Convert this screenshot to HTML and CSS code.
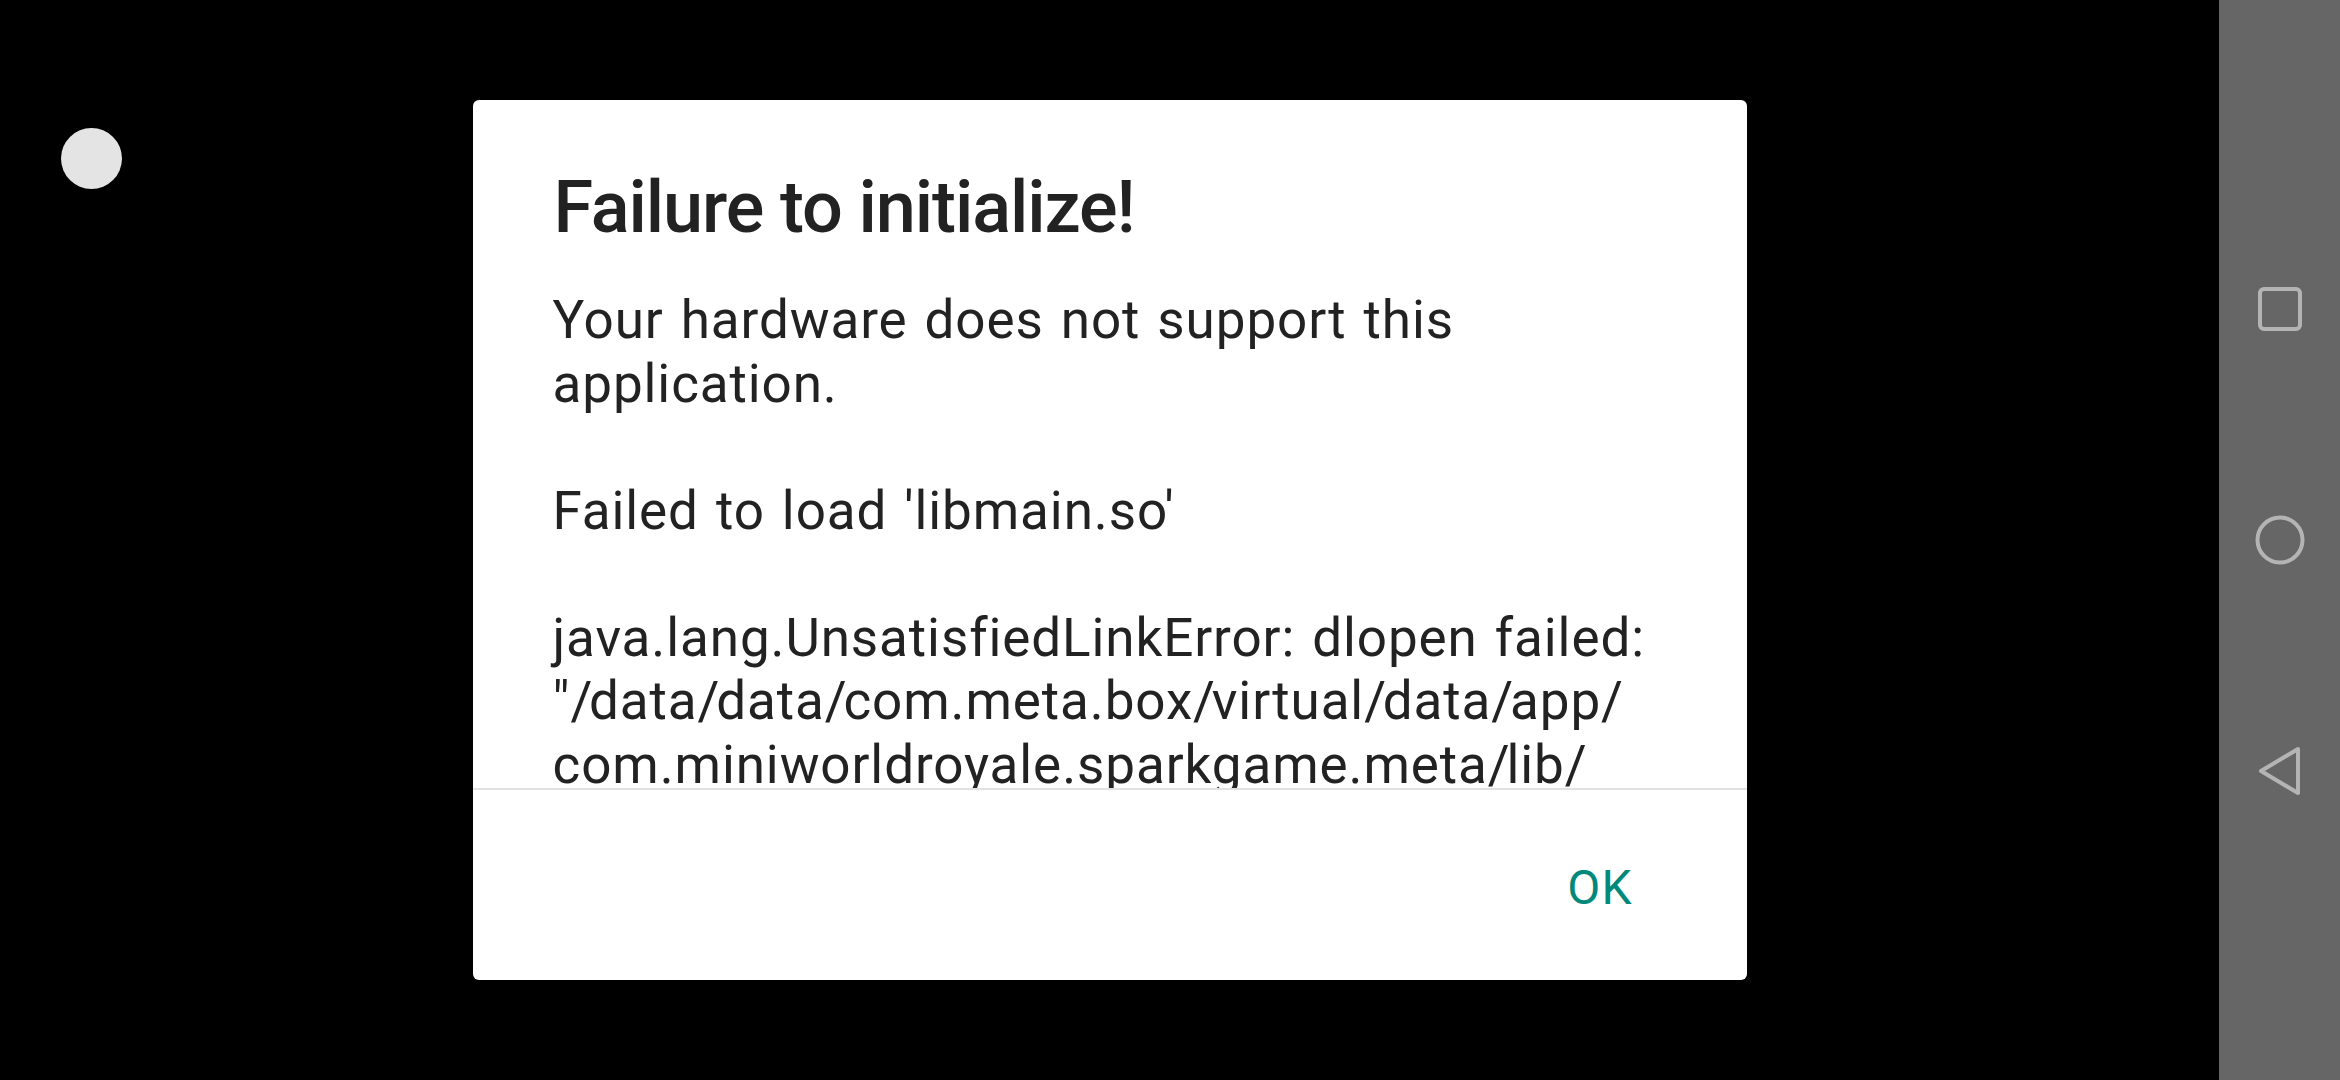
FILE: index.html
```html
<!DOCTYPE html>
<html lang="en">
<head>
<meta charset="utf-8">
<title>Failure to initialize!</title>
<link rel="stylesheet" href="styles.css">
</head>
<body>
<div class="screen">
  <main class="stage">
    <div class="float-ball"></div>
    <section class="dialog" role="alertdialog" aria-labelledby="dlg-title">
      <h1 class="dialog-title" id="dlg-title">Failure to initialize!</h1>
      <div class="dialog-message">
        <p class="line">Your hardware does not support this</p>
        <p class="line">application.</p>
        <p class="line blank">&nbsp;</p>
        <p class="line">Failed to load 'libmain.so'</p>
        <p class="line blank">&nbsp;</p>
        <p class="line">java.lang.UnsatisfiedLinkError: dlopen failed:</p>
        <p class="line">"<span class="sl">/</span>data<span class="sl">/</span>data<span class="sl">/</span>com.meta.box<span class="sl">/</span>virtual<span class="sl">/</span>data<span class="sl">/</span>app<span class="sl">/</span></p>
        <p class="line">com.miniworldroyale.sparkgame.meta<span class="sl">/</span>lib<span class="sl">/</span></p>
      </div>
      <div class="dialog-divider"></div>
      <div class="dialog-actions">
        <button class="btn-ok" type="button">OK</button>
      </div>
    </section>
  </main>
  <nav class="navbar" aria-label="System navigation">
    <svg class="nav-icon" viewBox="0 0 50 50" width="50" height="50" aria-label="Recents">
      <rect x="5" y="5" width="40" height="40" rx="4" ry="4" fill="none" stroke="#b4b4b4" stroke-width="4"/>
    </svg>
    <svg class="nav-icon" viewBox="0 0 50 50" width="50" height="50" aria-label="Home">
      <circle cx="25" cy="25" r="22.5" fill="none" stroke="#b4b4b4" stroke-width="4"/>
    </svg>
    <svg class="nav-icon" viewBox="0 0 50 50" width="50" height="50" aria-label="Back">
      <path d="M6 25 L43 3 L43 47 Z" fill="none" stroke="#b4b4b4" stroke-width="4" stroke-linejoin="round"/>
    </svg>
  </nav>
</div>
</body>
</html>
```

FILE: styles.css
```css
html, body {
  margin: 0;
  padding: 0;
  width: 2340px;
  height: 1080px;
  overflow: hidden;
  background: #000;
}

.screen {
  display: flex;
  width: 2340px;
  height: 1080px;
}

.stage {
  position: relative;
  flex: 1;
  display: flex;
  align-items: center;
  justify-content: center;
  background: #000;
}

.float-ball {
  position: absolute;
  left: 61px;
  top: 128px;
  width: 61px;
  height: 61px;
  border-radius: 50%;
  background: #e4e4e4;
}

.dialog {
  width: 1274px;
  height: 880px;
  background: #fff;
  border-radius: 6px;
  display: flex;
  flex-direction: column;
  box-sizing: border-box;
  padding-top: 64px;
  font-family: Roboto, "Noto Sans", sans-serif;
  color: #222;
}

.dialog-title {
  margin: 0 80px 37px 81px;
  font-size: 72px;
  font-weight: 500;
  letter-spacing: -1.1px;
  line-height: 88px;
  color: #222;
}

.dialog-message {
  height: 499px;
  overflow: hidden;
  padding: 0 60px 0 80px;
}

.line {
  margin: 0;
  font-size: 53px;
  letter-spacing: 0.9px;
  word-spacing: 3px;
  line-height: 63.5px;
  white-space: nowrap;
}

.sl {
  letter-spacing: -3.2px;
}

.dialog-divider {
  height: 2px;
  background: #e2e2e2;
}

.dialog-actions {
  flex: 1;
  display: flex;
  align-items: center;
  justify-content: flex-end;
  padding: 6px 114px 0 0;
}

.btn-ok {
  border: 0;
  background: none;
  padding: 0;
  font-family: Roboto, sans-serif;
  font-size: 48px;
  font-weight: 400;
  letter-spacing: 1px;
  color: #00897b;
  line-height: 56px;
}

.navbar {
  width: 121px;
  background: #666;
  display: flex;
  flex-direction: column;
  align-items: center;
  justify-content: center;
  gap: 181px;
}

.nav-icon {
  display: block;
}
```
